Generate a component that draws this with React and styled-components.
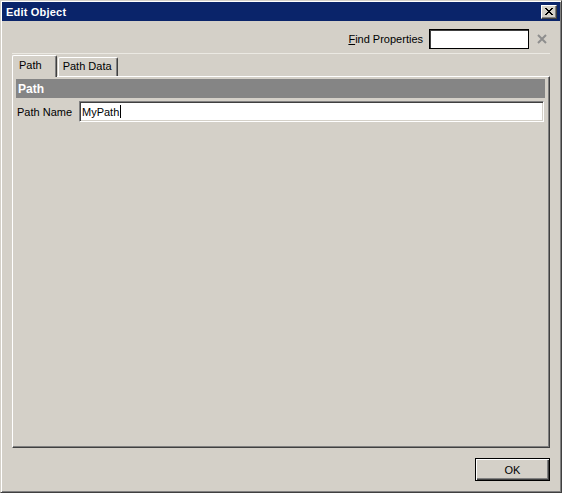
import React from "react";
import styled, { createGlobalStyle } from "styled-components";

const Global = createGlobalStyle`
  html, body { margin: 0; padding: 0; background: #d4d0c8; }
  body { font-family: "Liberation Sans", Arial, sans-serif; font-size: 11px; color: #000; }
  * { box-sizing: border-box; }
`;

const Window = styled.div`
  width: 562px;
  height: 493px;
  display: flex;
  flex-direction: column;
  background: #d4d0c8;
  border: 1px solid;
  border-color: #d4d0c8 #404040 #404040 #d4d0c8;
  box-shadow: inset 1px 1px #fff, inset -1px -1px #808080;
  padding: 1px;
`;

const TitleBar = styled.div`
  height: 19px;
  background: #0a246a;
  display: flex;
  align-items: center;
  justify-content: space-between;
  padding: 0 3px 0 4px;
`;

const Title = styled.span`
  color: #fff;
  font-weight: bold;
  font-size: 11px;
  letter-spacing: 0.2px;
`;

const CaptionButton = styled.div`
  width: 16px;
  height: 14px;
  background: #d4d0c8;
  border: 1px solid;
  border-color: #fff #404040 #404040 #fff;
  box-shadow: inset -1px -1px #808080;
  display: flex;
  align-items: center;
  justify-content: center;
`;

const Body = styled.div`
  flex: 1;
  display: flex;
  flex-direction: column;
  padding: 8px 10px 10px 10px;
`;

const FindRow = styled.div`
  display: flex;
  justify-content: flex-end;
  align-items: center;
  height: 20px;
`;

const FindLabel = styled.label`
  font-size: 11px;
  margin-right: 6px;
  u { text-decoration: underline; }
`;

const FindInput = styled.div`
  width: 100px;
  height: 20px;
  background: #fff;
  border: 1px solid #000;
  box-shadow: inset 1px 1px #404040;
`;

const ClearIcon = styled.div`
  width: 16px;
  display: flex;
  align-items: center;
  justify-content: center;
  margin-left: 5px;
`;

const Separator = styled.div`
  height: 1px;
  margin-top: 4px;
  background: #ebe9e3;
`;

const Tabs = styled.div`
  display: flex;
  align-items: flex-end;
  margin-top: 1px;
  height: 21px;
  position: relative;
  z-index: 1;
`;

const Tab = styled.div`
  height: ${(p) => (p.$active ? "22px" : "19px")};
  margin-bottom: ${(p) => (p.$active ? "-1px" : "0")};
  padding: ${(p) => (p.$active ? "3px 14px 0 6px" : "2px 5px 0 4px")};
  margin-left: ${(p) => (p.$active ? "0" : "1px")};
  background: #d4d0c8;
  border-style: solid;
  border-width: 1px 1px 0 1px;
  border-color: #fff #404040 #d4d0c8 #fff;
  box-shadow: inset -1px 0 #808080;
  border-radius: 2px 2px 0 0;
  font-size: 11px;
  white-space: nowrap;
`;

const Panel = styled.div`
  flex: 1;
  border: 1px solid;
  border-color: #fff #404040 #404040 #fff;
  box-shadow: inset -1px -1px #808080;
  padding: 2px 3px 3px 3px;
  display: flex;
  flex-direction: column;
`;

const SectionHeader = styled.div`
  height: 19px;
  background: #858585;
  color: #fff;
  font-weight: bold;
  font-size: 12px;
  display: flex;
  align-items: center;
  padding-left: 2px;
  margin-right: 1px;
`;

const PropRow = styled.div`
  display: flex;
  align-items: center;
  margin-top: 3px;
  padding-left: 1px;
`;

const PropLabel = styled.span`
  width: 62px;
  font-size: 11px;
`;

const PropInput = styled.div`
  flex: 1;
  height: 21px;
  margin-right: 2px;
  background: #fff;
  border: 1px solid;
  border-color: #808080 #fff #fff #808080;
  box-shadow: inset 1px 1px #404040, inset -1px -1px #d4d0c8;
  display: flex;
  align-items: center;
  padding-left: 2px;
  font-size: 11px;
`;

const Caret = styled.span`
  display: inline-block;
  width: 1px;
  height: 13px;
  background: #000;
  margin-left: 1px;
`;

const Footer = styled.div`
  display: flex;
  justify-content: flex-end;
  margin-top: 10px;
`;

const Button = styled.div`
  width: 75px;
  height: 23px;
  border: 1px solid #000;
  background: #d4d0c8;
  box-shadow: inset 1px 1px #fff, inset -1px -1px #404040, inset -2px -2px #808080;
  display: flex;
  align-items: center;
  justify-content: center;
  font-size: 11px;
`;

export default function App() {
  return (
    <>
      <Global />
      <Window>
        <TitleBar>
          <Title>Edit Object</Title>
          <CaptionButton>
            <svg width="8" height="7" viewBox="0 0 8 7" shapeRendering="crispEdges">
              <path d="M0 0h2v1h-2zM6 0h2v1h-2zM1 1h2v1h-2zM5 1h2v1h-2zM2 2h4v1h-4zM3 3h2v1h-2zM2 4h4v1h-4zM1 5h2v1h-2zM5 5h2v1h-2zM0 6h2v1h-2zM6 6h2v1h-2z" fill="#000" />
            </svg>
          </CaptionButton>
        </TitleBar>
        <Body>
          <FindRow>
            <FindLabel><u>F</u>ind Properties</FindLabel>
            <FindInput />
            <ClearIcon>
              <svg width="10" height="10" viewBox="0 0 10 10">
                <path d="M1 1L9 9M9 1L1 9" stroke="#8e8e8e" strokeWidth="2" />
              </svg>
            </ClearIcon>
          </FindRow>
          <Separator />
          <Tabs>
            <Tab $active>Path</Tab>
            <Tab>Path Data</Tab>
          </Tabs>
          <Panel>
            <SectionHeader>Path</SectionHeader>
            <PropRow>
              <PropLabel>Path Name</PropLabel>
              <PropInput>
                MyPath<Caret />
              </PropInput>
            </PropRow>
          </Panel>
          <Footer>
            <Button>OK</Button>
          </Footer>
        </Body>
      </Window>
    </>
  );
}
